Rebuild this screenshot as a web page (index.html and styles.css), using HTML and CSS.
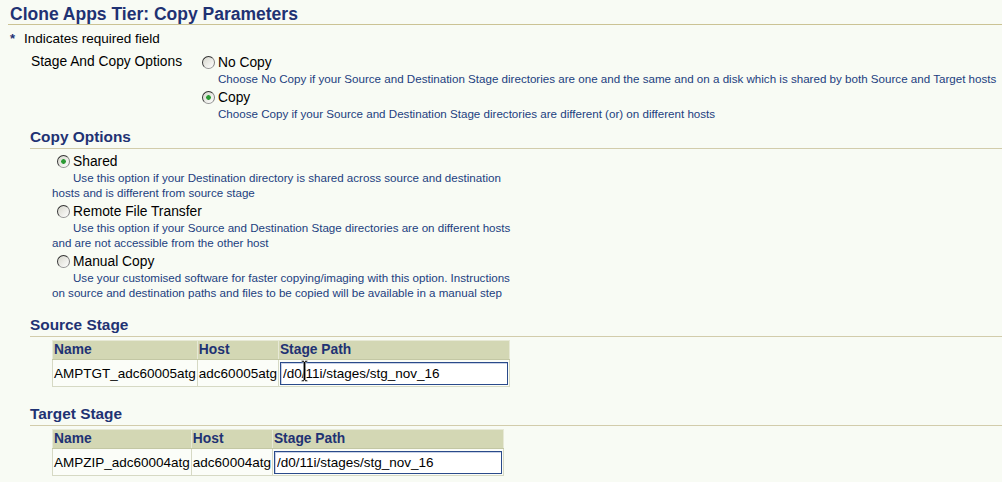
FILE: index.html
```html
<!DOCTYPE html>
<html lang="en">

<head>
    <meta charset="UTF-8">
    <meta name="viewport" content="width=device-width, initial-scale=1.0">
    <title>Clone Apps Tier: Copy Parameters</title>

    <link rel="stylesheet" href="styles.css">
</head>

<body>

    <h1 class="page-title">Clone Apps Tier: Copy Parameters</h1>

    <p class="required"><span class="req-mark">*</span>Indicates required field</p>

    <div class="field">
        <div class="field-label">Stage And Copy Options</div>
        <div class="field-options">
            <div class="option">
                <label class="radio-row"><input type="radio" name="stage">No Copy</label>
                <p class="desc">Choose No Copy if your Source and Destination Stage directories are one and the same and on a disk which is shared by both Source and Target hosts</p>
            </div>
            <div class="option">
                <label class="radio-row"><input type="radio" name="stage" checked>Copy</label>
                <p class="desc">Choose Copy if your Source and Destination Stage directories are different (or) on different hosts</p>
            </div>
        </div>
    </div>

    <h2 class="section-title">Copy Options</h2>
    <div class="copy-options">
        <div class="option">
            <label class="radio-row"><input type="radio" name="copy" checked>Shared</label>
            <p class="desc">Use this option if your Destination directory is shared across source and destination hosts and is different from source stage</p>
        </div>
        <div class="option">
            <label class="radio-row"><input type="radio" name="copy">Remote File Transfer</label>
            <p class="desc">Use this option if your Source and Destination Stage directories are on different hosts and are not accessible from the other host</p>
        </div>
        <div class="option">
            <label class="radio-row"><input type="radio" name="copy">Manual Copy</label>
            <p class="desc">Use your customised software for faster copying/imaging with this option. Instructions on source and destination paths and files to be copied will be available in a manual step</p>
        </div>
    </div>

    <h2 class="section-title section-gap">Source Stage</h2>
    <table class="stage-table">
        <thead>
            <tr>
                <th>Name</th>
                <th>Host</th>
                <th>Stage Path</th>
            </tr>
        </thead>
        <tbody>
            <tr>
                <td>AMPTGT_adc60005atg</td>
                <td>adc60005atg</td>
                <td>
                    <span class="path-field">
                        <input type="text" value="/d0/11i/stages/stg_nov_16">
                        <svg class="ibeam" width="7" height="22" viewBox="0 0 7 22">
                            <path d="M0.5 0.5h2.5v1h1v-1h2.5v1.5h-1.8v18h1.8v1.5h-2.5v-1h-1v1h-2.5v-1.5h1.8v-18h-1.8z" fill="#000" stroke="#fff" stroke-width="0.5"></path>
                        </svg>
                    </span>
                </td>
            </tr>
        </tbody>
    </table>

    <h2 class="section-title section-gap">Target Stage</h2>
    <table class="stage-table">
        <thead>
            <tr>
                <th>Name</th>
                <th>Host</th>
                <th>Stage Path</th>
            </tr>
        </thead>
        <tbody>
            <tr>
                <td>AMPZIP_adc60004atg</td>
                <td>adc60004atg</td>
                <td>
                    <span class="path-field">
                        <input type="text" value="/d0/11i/stages/stg_nov_16">
                    </span>
                </td>
            </tr>
        </tbody>
    </table>

</body>

</html>
```

FILE: styles.css
```css
*,
*::before,
*::after {
    box-sizing: border-box;
}

body {
    margin: 0;
    padding: 0 0 0 8px;
    font-family: "Liberation Sans", Arial, Helvetica, sans-serif;
    background-color: #f8fbf4;
    color: #000;
}

.page-title {
    margin: 0;
    padding: 4px 2px 0;
    font-size: 17.5px;
    line-height: 20px;
    font-weight: bold;
    color: #1f3273;
    border-bottom: 1px solid #cbc394;
}

.required {
    margin: 6px 0 0;
    font-size: 13.5px;
    line-height: 16px;
    display: flex;
    align-items: center;
}

.req-mark {
    width: 16px;
    padding-left: 2px;
    color: #1f3273;
    font-weight: bold;
    font-size: 13px;
}

.field {
    display: flex;
    margin-top: 6px;
    padding-left: 23px;
}

.field-label {
    width: 171px;
    font-size: 13.8px;
    line-height: 18px;
}

.option+.option {
    margin-top: 2px;
}

.radio-row {
    display: flex;
    align-items: center;
    gap: 3px;
    height: 18px;
    font-size: 13.8px;
}

.radio-row input {
    appearance: none;
    -webkit-appearance: none;
    width: 13px;
    height: 13px;
    margin: 0;
    border-radius: 50%;
    border: 1px solid;
    border-color: #333333 #808080 #959595 #333333;
    background: linear-gradient(135deg, #d6d6cc, #ffffff);
}

.radio-row input:checked {
    background: radial-gradient(circle, #2c9a35 0 2px, #bfe0bf 2.5px, transparent 3px),
        linear-gradient(135deg, #d6d6cc, #ffffff);
}

.desc {
    margin: 0;
    padding-left: 16px;
    font-size: 11.6px;
    line-height: 15px;
    color: #22407f;
}

.section-title {
    margin: 7px 0 0 22px;
    padding-bottom: 2px;
    font-size: 15.4px;
    line-height: 18px;
    font-weight: bold;
    color: #1f3273;
    border-bottom: 1px solid #d2ccab;
}

.section-gap {
    margin-top: 16px;
}

.stage-table+.section-gap {
    margin-top: 18px;
}

.copy-options {
    margin: 3px 0 0 44px;
    width: 468px;
}

.copy-options .radio-row {
    padding-left: 5px;
}

.copy-options .desc {
    padding-left: 0;
    text-indent: 21px;
}

.stage-table {
    margin: 3px 0 0 44px;
    border-collapse: collapse;
    border: 1px solid #bec398;
    font-size: 13.5px;
}

.stage-table th {
    padding: 0 1px;
    line-height: 18px;
    text-align: left;
    font-size: 13.8px;
    font-weight: bold;
    color: #1f3273;
    background-color: #d3d7b4;
    border: 1px solid #e7e9d6;
    border-bottom-color: #c3c7a4;
}

.stage-table td {
    padding: 2px 1px 1px;
    white-space: nowrap;
    border: 1px solid #d6d9c4;
    background-color: #fbfdf8;
}

.path-field {
    position: relative;
    display: block;
}

.path-field input {
    display: block;
    width: 228px;
    height: 23px;
    margin: 0;
    padding: 0 2px;
    font-family: inherit;
    font-size: 13.5px;
    color: #000;
    background-color: #fff;
    border: 1px solid #2a4a8a;
    box-shadow: inset 1px 1px 0 #c9d2e6;
}

.ibeam {
    position: absolute;
    left: 21px;
    top: -2px;
}
```
